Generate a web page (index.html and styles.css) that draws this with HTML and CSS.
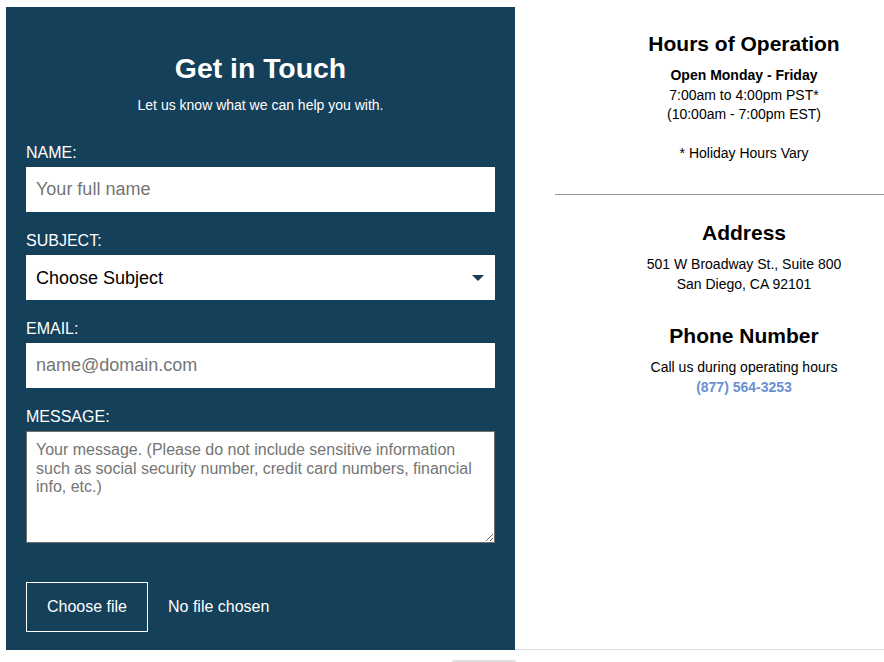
FILE: index.html
```html
<!DOCTYPE html>
<html lang="en">
<head>
<meta charset="utf-8">
<title>Contact</title>
<link rel="stylesheet" href="styles.css">
</head>
<body>
<div class="page">
  <div class="row">
    <form class="panel">
      <h1 class="title">Get in Touch</h1>
      <p class="subtitle">Let us know what we can help you with.</p>

      <label class="label" for="name">NAME:</label>
      <input class="field" id="name" type="text" placeholder="Your full name">

      <label class="label" for="subject">SUBJECT:</label>
      <div class="select-wrap">
        <select class="field select" id="subject">
          <option>Choose Subject</option>
        </select>
        <svg class="caret" width="12" height="6" viewBox="0 0 12 6"><path d="M0 0H12L6 6Z" fill="#1d3a50"/></svg>
      </div>

      <label class="label" for="email">EMAIL:</label>
      <input class="field" id="email" type="email" placeholder="name@domain.com">

      <label class="label" for="message">MESSAGE:</label>
      <textarea class="message" id="message" placeholder="Your message. (Please do not include sensitive information such as social security number, credit card numbers, financial info, etc.)"></textarea>

      <div class="file-row">
        <button type="button" class="file-btn">Choose file</button>
        <span class="file-name">No file chosen</span>
      </div>
    </form>

    <aside class="info">
      <h2 class="info-title">Hours of Operation</h2>
      <p class="info-text hours">Open Monday - Friday<br><span class="reg">7:00am to 4:00pm PST*<br>(10:00am - 7:00pm EST)<br><br>* Holiday Hours Vary</span></p>
      <hr class="divider">
      <h2 class="info-title addr">Address</h2>
      <p class="info-text addr-text">501 W Broadway St., Suite 800<br>San Diego, CA 92101</p>
      <h2 class="info-title phone-title">Phone Number</h2>
      <p class="info-text call">Call us during operating hours<br><a class="phone" href="#">(877) 564-3253</a></p>
    </aside>
  </div>
  <div class="below"></div>
</div>
</body>
</html>
```
FILE: styles.css
```css
html, body {
  margin: 0;
  padding: 0;
  overflow: hidden;
  background: #fff;
}
body {
  font-family: "Liberation Sans", Arial, sans-serif;
  color: #000;
}
.page {
  padding: 7px 0 0 6px;
}
.row {
  display: flex;
  align-items: stretch;
}
.panel {
  box-sizing: border-box;
  width: 509px;
  flex: none;
  background: #15405a;
  color: #fff;
  padding: 20px 20px 18px;
  display: flex;
  flex-direction: column;
}
.title {
  margin: 25px 0 0;
  font-size: 28.4px;
  line-height: 32px;
  font-weight: bold;
  text-align: center;
}
.subtitle {
  margin: 13px 0 0;
  font-size: 14px;
  line-height: 16px;
  text-align: center;
}
.label {
  display: block;
  font-size: 16px;
  line-height: 18px;
  margin: 0 0 5px;
}
.subtitle + .label {
  margin-top: 31px;
}
.field {
  box-sizing: border-box;
  width: 469px;
  height: 45px;
  border: 0;
  margin: 0 0 20px;
  padding: 0 10px;
  font-family: "Liberation Sans", Arial, sans-serif;
  font-size: 18px;
  color: #000;
  background: #fff;
  border-radius: 0;
  outline: none;
}
.field::placeholder {
  color: #757575;
}
.select-wrap {
  position: relative;
  width: 469px;
}
.select {
  -webkit-appearance: none;
  appearance: none;
  display: block;
}
.caret {
  position: absolute;
  left: 446px;
  top: 20px;
}
.message {
  box-sizing: border-box;
  width: 469px;
  height: 112px;
  margin: 0;
  border: 1px solid #6f6f6f;
  padding: 9px 9px;
  font-family: "Liberation Sans", Arial, sans-serif;
  font-size: 16px;
  line-height: 18.5px;
  color: #000;
  background: #fff;
  border-radius: 0;
  outline: none;
  resize: vertical;
}
.message::placeholder {
  color: #757575;
}
.file-row {
  display: flex;
  align-items: center;
  gap: 20px;
  margin-top: 39px;
}
.file-btn {
  box-sizing: border-box;
  width: 122px;
  height: 50px;
  background: transparent;
  color: #fff;
  border: 1px solid #fff;
  border-radius: 0;
  font-family: "Liberation Sans", Arial, sans-serif;
  font-size: 16px;
  padding: 0;
}
.file-name {
  font-size: 16px;
}
.info {
  flex: 1;
  min-width: 0;
  box-sizing: border-box;
  padding-left: 40px;
  border-bottom: 1px solid #dcdcdc;
}
.info-title {
  margin: 25px 0 0;
  padding-left: 49px;
  font-size: 21px;
  line-height: 24px;
  font-weight: bold;
  text-align: center;
  white-space: nowrap;
}
.info-text {
  margin: 9px 0 0;
  padding-left: 49px;
  font-size: 14px;
  line-height: 19.6px;
  text-align: center;
  white-space: nowrap;
}
.hours {
  margin-top: 10px;
  font-weight: bold;
}
.reg {
  font-weight: normal;
}
.divider {
  margin: 30px 0 0;
  border: 0;
  border-top: 1px solid #9a9a9a;
  height: 0;
}
.addr {
  margin-top: 26px;
}
.addr-text {
  margin-top: 10px;
}
.phone-title {
  margin-top: 30px;
}
.call {
  margin-top: 10px;
}
.phone {
  color: #6b8fd4;
  font-weight: bold;
  text-decoration: none;
}
.below {
  margin: 10px 0 0 446px;
  width: 64px;
  height: 10px;
  background: #dedede;
  border-radius: 2px 2px 0 0;
}
```
